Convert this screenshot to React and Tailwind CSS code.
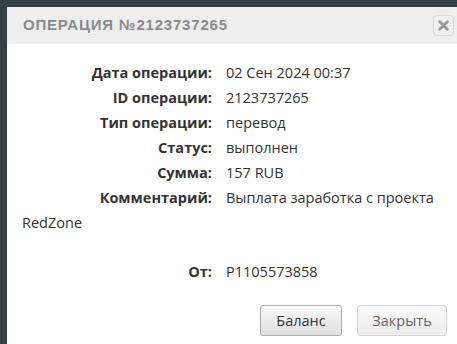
import React from "react";

const rows = [
  { label: "Дата операции:", value: "02 Сен 2024 00:37" },
  { label: "ID операции:", value: "2123737265" },
  { label: "Тип операции:", value: "перевод" },
  { label: "Статус:", value: "выполнен" },
  { label: "Сумма:", value: "157 RUB" },
  { label: "Комментарий:", value: "Выплата заработка с проекта RedZone" },
];

function Row({ label, value }) {
  return (
    <div className="leading-[25px]">
      <span className="inline-block w-[190px] text-right font-bold text-[#333]">{label}</span>
      <span className="ml-[14px] text-[#333]">{value}</span>
    </div>
  );
}

export default function App() {
  return (
    <div className="w-[457px] h-[344px] overflow-hidden bg-[#343f46] pl-[7px] pt-[7px] font-['Open_Sans',sans-serif]">
      <div className="w-[470px] h-[360px] bg-white">
        {/* Header */}
        <div className="h-[37px] bg-[#eeeeee] flex items-center pl-[16px] pr-[23px]">
          <h2 className="flex-1 text-[15px] font-bold tracking-[0.8px] text-[#8a8a8a] font-['Liberation_Sans',sans-serif]">
            ОПЕРАЦИЯ №2123737265
          </h2>
          <button className="w-[21px] h-[21px] rounded-[4px] border border-[#d8d8d8] bg-[#f0f0f0] flex items-center justify-center">
            <svg width="11" height="11" viewBox="0 0 10 10">
              <path d="M1.5 1.5 L8.5 8.5 M8.5 1.5 L1.5 8.5" stroke="#999" strokeWidth="2.6" strokeLinecap="round" />
            </svg>
          </button>
        </div>

        {/* Body */}
        <div className="pl-[15px] pr-[30px] pt-[16px] text-[14.5px]">
          {rows.map((r) => (
            <Row key={r.label} {...r} />
          ))}
          <div className="h-[24px]" />
          <Row label="От:" value="P1105573858" />
        </div>

        {/* Footer */}
        <div className="flex gap-[15px] pl-[253px] pt-[21px]">
          <button className="w-[82px] h-[31px] rounded-[3px] border border-[#a9a9a9] bg-gradient-to-b from-[#fafafa] to-[#e0e0e0] text-[14.5px] text-[#333]">
            Баланс
          </button>
          <button className="w-[90px] h-[31px] rounded-[3px] border border-[#d4d4d4] bg-gradient-to-b from-[#fafafa] to-[#ececec] text-[14.5px] text-[#666]">
            Закрыть
          </button>
        </div>
      </div>
    </div>
  );
}
